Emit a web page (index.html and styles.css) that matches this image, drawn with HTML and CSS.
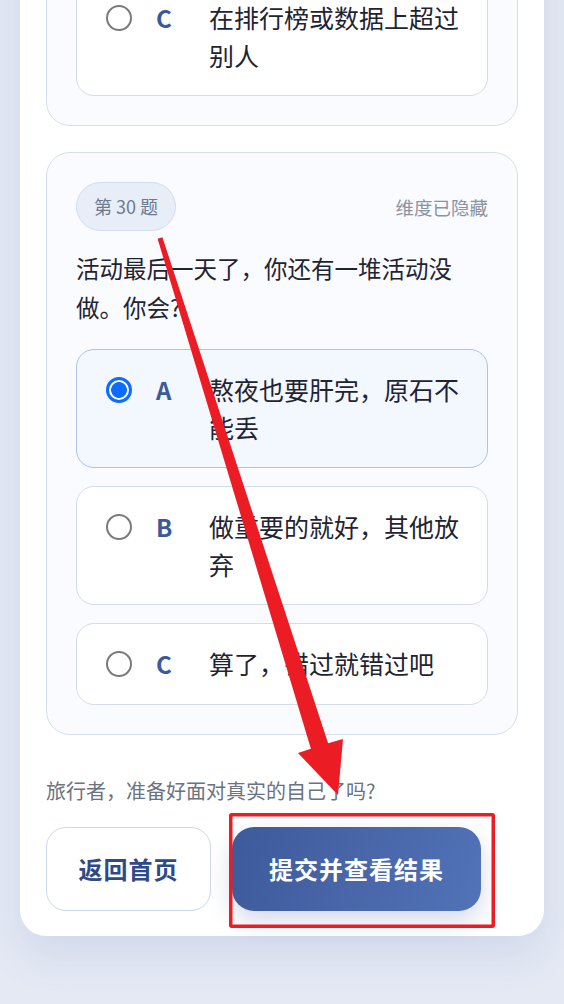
FILE: index.html
```html
<!DOCTYPE html>
<html lang="zh-CN">
<head>
<meta charset="utf-8">
<meta name="viewport" content="width=device-width, initial-scale=1">
<title>测试</title>
<link rel="stylesheet" href="styles.css">
</head>
<body>
<main class="panel">
  <section class="qcard qcard-prev">
    <label class="option">
      <input type="radio" name="q29" class="radio">
      <span class="letter">C</span>
      <span class="otext">在排行榜或数据上超过别人</span>
    </label>
  </section>

  <section class="qcard">
    <div class="qhead">
      <span class="badge">第 30 题</span>
      <span class="hidden-dim">维度已隐藏</span>
    </div>
    <p class="qtext">活动最后一天了，你还有一堆活动没做。你会?</p>
    <div class="options">
      <label class="option selected">
        <input type="radio" name="q30" class="radio" checked>
        <span class="letter">A</span>
        <span class="otext">熬夜也要肝完，原石不能丢</span>
      </label>
      <label class="option">
        <input type="radio" name="q30" class="radio">
        <span class="letter">B</span>
        <span class="otext">做重要的就好，其他放弃</span>
      </label>
      <label class="option">
        <input type="radio" name="q30" class="radio">
        <span class="letter">C</span>
        <span class="otext">算了，错过就错过吧</span>
      </label>
    </div>
  </section>

  <p class="footnote">旅行者，准备好面对真实的自己了吗?</p>
  <div class="actions">
    <button class="btn btn-back" type="button">返回首页</button>
    <button class="btn btn-submit" type="button">提交并查看结果</button>
  </div>
</main>

<svg class="annotation" width="564" height="1004" viewBox="0 0 564 1004" aria-hidden="true">
  <polygon fill="#ec1c24" points="162.4,237.2 328.1,743.3 343,739 338,795 298,753 310.9,748.7 157.6,238.8"/>
  <rect x="230.75" y="814.75" width="262.5" height="111.5" rx="1" fill="none" stroke="#ec1c24" stroke-width="3.5"/>
</svg>
</body>
</html>
```

FILE: styles.css
```css
html, body {
  margin: 0;
  padding: 0;
}

body {
  display: flow-root;
  background: #e4e9f4;
  font-family: "Noto Sans CJK SC", "Noto Sans", sans-serif;
  color: #1f2433;
  min-height: 1004px;
  overflow: hidden;
}

.panel {
  margin: -79px 20px 0;
  padding: 26px 26px 25px;
  background: #ffffff;
  border-radius: 0 0 26px 26px;
  box-shadow: 0 18px 40px rgba(110, 130, 180, 0.16);
  display: flex;
  flex-direction: column;
}

.qcard {
  background: #fafbfe;
  border: 1px solid #d6dfed;
  border-radius: 24px;
  padding: 29px;
}

.qcard + .qcard {
  margin-top: 26px;
}

.qhead {
  display: flex;
  justify-content: space-between;
  align-items: center;
}

.badge {
  display: inline-block;
  box-sizing: border-box;
  height: 49px;
  line-height: 46px;
  padding: 0 17px;
  border: 1.5px solid #d2dcec;
  background: #e8eef8;
  border-radius: 25px;
  color: #6b7a90;
  font-size: 18px;
}

.hidden-dim {
  color: #8a93a3;
  font-size: 18.5px;
}

.qtext {
  margin: 18px 0 22px;
  padding-right: 20px;
  font-size: 23.5px;
  line-height: 39px;
  color: #1f2433;
}

.options {
  display: flex;
  flex-direction: column;
  gap: 18px;
}

.option {
  display: grid;
  grid-template-columns: 26px 29px 1fr;
  column-gap: 24px;
  align-items: start;
  background: #ffffff;
  border: 1px solid #d3dced;
  border-radius: 18px;
  padding: 21px 26px 21px 29px;
}

.option.selected {
  background: #f3f7fe;
  border-color: #aec2e6;
}

.radio {
  appearance: none;
  -webkit-appearance: none;
  box-sizing: border-box;
  width: 26px;
  height: 26px;
  margin: 5.75px 0 0;
  border: 2px solid #7a7a7a;
  border-radius: 50%;
  background: #ffffff;
}

.radio:checked {
  border: 3px solid #0b6cff;
  background: radial-gradient(circle at center, #0b6cff 0, #0b6cff 7.5px, #ffffff 8.3px);
}

.letter {
  font-size: 24px;
  font-weight: 700;
  line-height: 37.5px;
  color: #3b5a9a;
}

.otext {
  font-size: 25px;
  line-height: 37.5px;
  color: #1f2433;
}

.footnote {
  margin: 41px 0 21px;
  font-size: 20px;
  line-height: 30px;
  color: #6b7280;
}

.actions {
  display: flex;
  gap: 21px;
}

.btn {
  height: 84px;
  font-family: inherit;
  font-size: 24px;
  font-weight: 700;
  letter-spacing: 1px;
  cursor: pointer;
}

.btn-back {
  width: 165px;
  background: #ffffff;
  border: 1.5px solid #cdd8ea;
  border-radius: 20px;
  color: #2e4a88;
}

.btn-submit {
  width: 249px;
  border: none;
  border-radius: 22px;
  color: #ffffff;
  background: linear-gradient(110deg, #3d5a9b 0%, #4866a8 50%, #5273b9 100%);
  box-shadow: 0 10px 24px rgba(60, 85, 150, 0.22);
}

.annotation {
  position: absolute;
  top: 0;
  left: 0;
  pointer-events: none;
}
```
